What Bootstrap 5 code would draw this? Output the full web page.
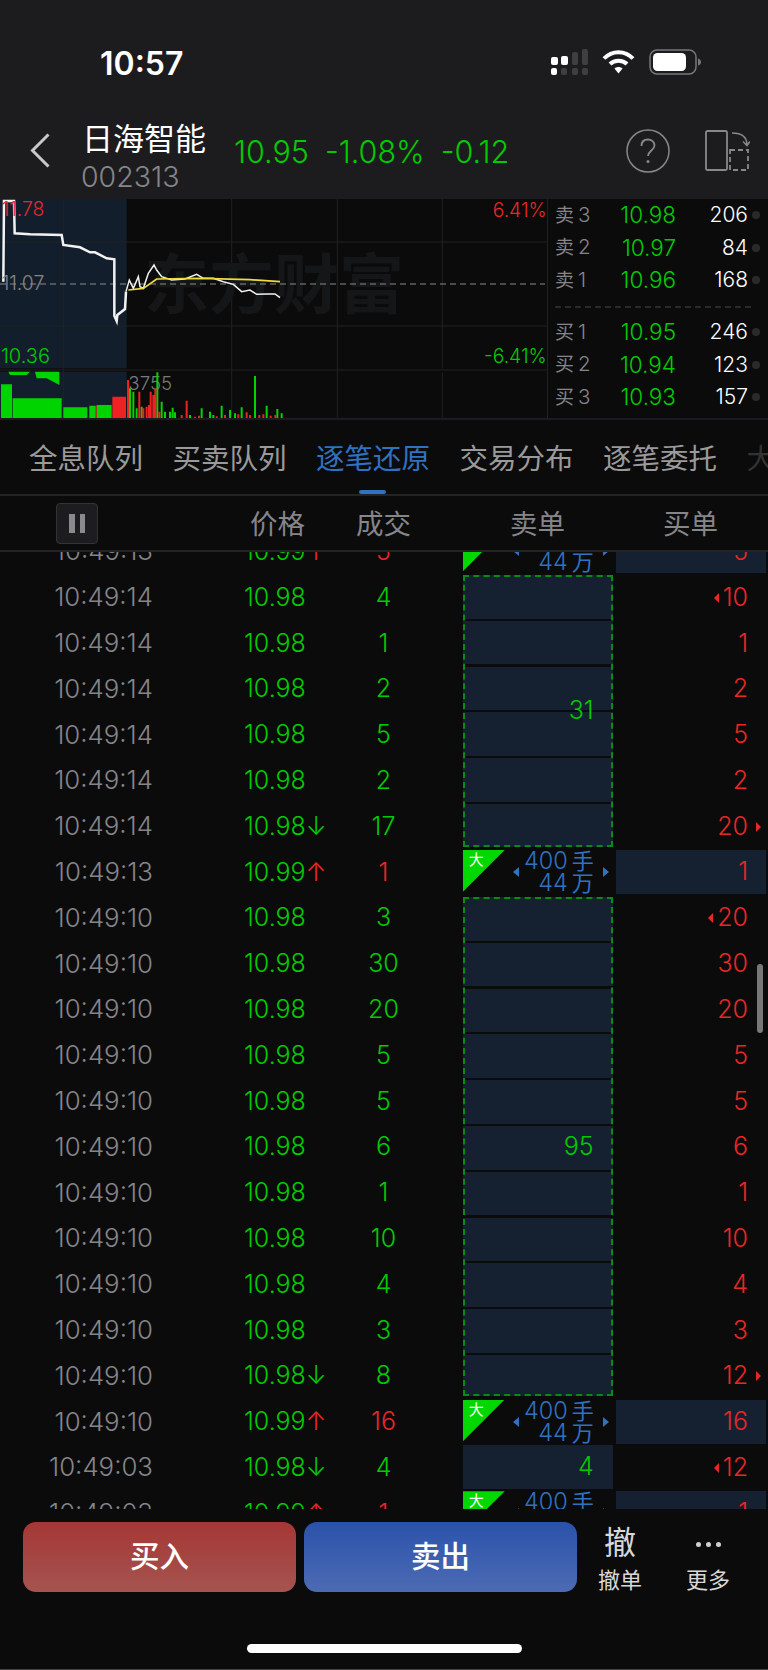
<!DOCTYPE html>
<html lang="zh"><head><meta charset="utf-8"><title>日海智能</title>
<link href="https://cdn.jsdelivr.net/npm/bootstrap@5.3.0/dist/css/bootstrap.min.css" rel="stylesheet">
<style>
:root{--g:#00cb00;--r:#ea2626;--b:#2f72c0;--gy:#85858a;--bg:#0b0b0c;--cell:#152130}
html,body{margin:0;width:768px;height:1670px;overflow:hidden;background:var(--bg)}
body{font-family:Inter,"Noto Sans CJK SC",sans-serif;font-weight:300;color:#fff;border-bottom:1px solid #444}
.phone-head{background:#1c1c1e;height:199px}
.status-line{height:105px;padding:50px 67px 0 100px;gap:14px}
.clock{font-size:32px;font-weight:600;line-height:28px}
.status-icons{gap:14px;margin-top:-1px}
.app-head{height:92px;padding-left:30px;padding-right:18px}
.back-ico{margin-top:28px;flex:none}
.name-col{margin-top:16px;margin-left:32px;width:124px;flex:none}
.stock-name{font-size:31px;line-height:36px;font-weight:400;white-space:nowrap}
.stock-code{font-size:28.5px;line-height:34px;color:var(--gy);margin-left:-1px;margin-top:3px}
.head-quote{font-size:30.5px;line-height:34px;color:var(--g);margin-left:28px;margin-top:30px;gap:16px;white-space:nowrap}
.help-ico{margin-top:24px;flex:none}
.split-ico{margin-top:25px;margin-left:35px;flex:none}
.market{height:221px;border-bottom:2px solid #1c1c1e}
.chart-pane{width:547px;height:219px;flex:none}
.chart-pane svg{display:block}
.chart-pane text{font-family:Inter,sans-serif;font-weight:300}
.chart-pane .wm{font-family:"Noto Sans CJK SC",sans-serif;font-weight:700}
.book{width:221px;border-left:1px solid #222;padding:0 0 0 7px}
.book-row{height:32.5px;line-height:32.5px}
.book-lab{width:34px;font-size:19px;color:var(--gy);font-weight:400;white-space:nowrap}
.book-lab span{font-size:20.5px;font-weight:300;margin-left:4px}
.book-price{width:87px;text-align:right;color:var(--g);font-size:22.5px}
.book-qty{width:72px;text-align:right;font-size:21px}
.book-dot{width:8px;height:8px;border-radius:50%;background:#2a2a2a;margin-left:4px}
.book-sep{height:19.5px;margin-right:17px;padding-top:9px}
.book-sep div{border-top:2px dashed #2a2a2a}
.tabs-line{height:76px;padding-left:29px;gap:29px;border-bottom:2px solid #232323;position:relative;white-space:nowrap;overflow:hidden}
.tab-item{font-size:28.5px;line-height:78px;height:74px;width:114.500px;color:#9a9a9a;font-weight:400;flex:none}
.tab-on{color:var(--b)}
.tab-off{color:#333}
.tab-mark{position:absolute;left:359px;bottom:0;width:27px;height:4px;border-radius:2px;background:var(--b)}
.col-line{height:56px;border-bottom:2px solid #232323;font-size:27.5px;font-weight:400;color:#85858a;position:relative}
.col-line span{position:absolute;top:10px;line-height:36px}
.pause-box{position:absolute;left:56px;top:7px;width:42px;height:41px;border:1px solid #333;border-radius:4px;background:#1d1d1f;display:flex;align-items:center;justify-content:center;gap:5px}
.pause-box i{width:5.5px;height:19px;background:#8a8a8e;display:block}
.tape-view{height:957px;overflow:hidden;position:relative}
.tape{display:grid;grid-template-columns:153px 184px 93px 186px 152px;grid-auto-rows:45.8px;margin-top:-23.1px;font-size:25px}
.tape>div{display:flex;align-items:center;min-width:0}
.tape>.t-time{color:var(--gy);justify-content:flex-end;font-size:25.8px}
.t-price{color:var(--g);padding-left:91px;white-space:nowrap}
.t-price b{font-weight:300}
.t-up{color:var(--r)}
.t-vol{justify-content:center}
.c-g{color:var(--g)}.c-r{color:var(--r)}
.t-sell{margin:1px 3.3px 2px 32.7px;color:var(--g);justify-content:flex-end;padding-right:19px}
.t-span6{grid-row:span 6;margin-top:.3px;margin-bottom:2.8px}
.t-span11{grid-row:span 11;margin-top:1.4px;margin-bottom:2.8px}
.t-group{border:2px dashed #088c18;padding-right:17px;background:repeating-linear-gradient(var(--cell) 0 41.7px,#0b0b0c 41.7px 43.9px,var(--cell) 43.9px 45.8px)}
.t-plain{background:var(--cell);margin-top:0;margin-bottom:1.8px}
.tape>.t-big{position:relative;color:var(--b);margin-top:.5px;margin-bottom:1.3px;padding-right:19px;flex-direction:column;align-items:flex-end;justify-content:center;line-height:22px;font-size:23.5px}
.t-big .zh{font-weight:400;font-size:22px;margin-left:4px}
.big-flag{position:absolute;left:0;top:0;width:42px;height:42px;background:#00d800;clip-path:polygon(0 0,100% 0,0 100%);color:#fff;font-size:15px;line-height:20px;padding-left:6px;font-weight:400}
.tri-l,.tri-r{position:absolute;top:50%;margin-top:-5px;border-style:solid;border-color:transparent;border-width:5px 0}
.t-big .tri-l{left:50px;border-right:6px solid var(--b)}
.t-big .tri-r{right:4px;border-left:6px solid var(--b)}
.t-buy{color:var(--r);justify-content:flex-end;padding-right:18px;margin-right:2px;position:relative}
.tape>.t-fill{background:var(--cell);margin-top:.5px;margin-bottom:1.3px}
.t-buy .tri-l{position:static;margin:0 4px 0 0;border-right:5px solid var(--r)}
.t-buy .tri-r{right:5px;border-left:5px solid var(--r)}
.scroll-thumb{position:absolute;left:757px;top:412px;width:6px;height:69px;border-radius:3px;background:#777}
.foot{height:160px;padding:13px 0 0 23px;position:relative}
.trade-btn{width:273px;height:70px;border-radius:13px;border:0;color:#fff;font-size:29.5px;line-height:64px;font-weight:500;font-family:"Noto Sans CJK SC",sans-serif;padding:0 0 6px}
.btn-buyin{background:linear-gradient(#a53735,#a55450)}
.btn-sellout{background:linear-gradient(#2a52ab,#4d6bb4);margin-left:8px}
.foot-act{width:88px;text-align:center;color:#d8d8d8;font-weight:400;margin-left:-1px;margin-right:1px}
.foot-act .bigch{font-size:32px;line-height:38px;height:38px;margin-top:2px}
.foot-dots{height:38px;gap:5px;margin-top:2px;padding-top:3px}
.foot-dots i{width:5px;height:5px;border-radius:50%;background:#d0d0d0;display:block}
.foot-act .lab{font-size:22px;line-height:28px;margin-top:4px}
.home-bar{position:absolute;left:246.5px;top:135px;width:275px;height:9px;border-radius:5px;background:#fff}
</style></head><body>
<div class="phone-head">
 <div class="status-line d-flex justify-content-between">
  <div class="clock">10:57</div>
  <div class="status-icons d-flex align-items-start">
   <svg width="37" height="26" viewBox="0 0 37 26"><g fill="#fff"><rect x="0" y="8" width="7" height="8" rx="2"/><rect x="10" y="7" width="7" height="9" rx="2"/><rect x="0" y="19" width="6" height="7" rx="2"/></g><g fill="#3f3f3f"><rect x="21" y="3" width="6" height="13" rx="2"/><rect x="31" y="0" width="6" height="16" rx="2"/><rect x="10" y="19" width="6" height="7" rx="2"/><rect x="21" y="19" width="6" height="7" rx="2"/><rect x="31" y="19" width="6" height="7" rx="2"/></g></svg>
   <svg width="33" height="25" viewBox="0 0 33 25"><g fill="none" stroke="#fff" stroke-width="4"><path d="M2 9.5C10 1 23 1 31 9.5"/><path d="M8 15C12.500 10.500 20.500 10.500 25 15"/></g><path d="M12.500 19.500C14.500 17.500 18.500 17.500 20.500 19.500L16.500 24.500Z" fill="#fff"/></svg>
   <svg width="52" height="26" viewBox="0 0 52 26"><rect x="1" y="1" width="46" height="24" rx="7" fill="none" stroke="#777" stroke-width="1.500"/><rect x="4" y="4" width="33" height="18" rx="4.500" fill="#fff"/><path d="M49 9.500C51 10 52 11.500 52 13S51 16 49 16.500Z" fill="#777"/></svg>
  </div>
 </div>
 <div class="app-head d-flex align-items-start">
  <svg class="back-ico" width="20" height="35" viewBox="0 0 20 35"><path d="M18.500 1.500L2.500 17.500L18.500 33.500" fill="none" stroke="#c8c8c8" stroke-width="3"/></svg>
  <div class="name-col">
   <div class="stock-name">日海智能</div>
   <div class="stock-code">002313</div>
  </div>
  <div class="head-quote d-flex"><span>10.95</span><span>-1.08%</span><span>-0.12</span></div>
  <svg class="help-ico ms-auto" width="44" height="44" viewBox="0 0 44 44"><circle cx="22" cy="22" r="21" fill="none" stroke="#888" stroke-width="1.500"/><path d="M15.500 17C15.500 12.500 18.500 10.500 22 10.500S28.500 13 28.500 16.500C28.500 21 22.500 21.500 22 27" fill="none" stroke="#888" stroke-width="1.800"/><circle cx="22" cy="32.500" r="1.500" fill="#888"/></svg>
  <svg class="split-ico" width="45" height="41" viewBox="0 0 45 41"><rect x="1" y="1" width="21" height="39" rx="1.500" fill="none" stroke="#888" stroke-width="1.800"/><rect x="25" y="20" width="18" height="20" fill="none" stroke="#888" stroke-width="1.800" stroke-dasharray="5 3"/><path d="M27 3C36 3 42 6 42 15M38 11.500L42 15.500L45 11.500" fill="none" stroke="#888" stroke-width="1.500"/></svg>
 </div>
</div>
<div class="market d-flex">
 <div class="chart-pane">
  <svg width="547" height="219" viewBox="0 12 1641 657">
   <rect x="0" y="12" width="380" height="508" fill="#131e2c"/><rect x="0" y="530" width="380" height="140" fill="#131e2c"/>
   <g stroke="#222" stroke-width="3"><path d="M0 141H1641M0 393H1641M0 525H1641M0 670H1641M190 12V668M695 12V668M1012 12V668M1327 12V520M1327 532V668"/></g>
   <text class="wm" x="432" y="340" font-size="195" fill="#151617">东方财富</text>
   <path d="M0 267H1635" stroke="#8a8a8a" stroke-width="3" stroke-dasharray="18 12"/>
   <polyline fill="none" stroke="#f2f2f2" stroke-width="7.500" points="10,260 12,18 42,18 44,115 90,118 185,120 190,150 240,157 270,172 285,172 320,190 343,193 343,362 350,378 352,360 375,342 378,290"/>
   <polyline fill="none" stroke="#f2f2f2" stroke-width="4.500" points="378,290 388,255 400,280 415,245 420,275 430,280 445,235 462,210 470,225 485,245 515,255 555,252 590,238 610,250 640,250 670,260 700,268 725,290 750,285 770,298 800,297 825,297 840,308"/>
   <polyline fill="none" stroke="#ecdc40" stroke-width="5" points="385,285 430,280 470,252 600,250 750,254 840,260"/>
   <text x="5" y="62" font-size="58" fill="#ea2626">11.78</text>
   <text x="5" y="285" font-size="58" fill="#85858a">11.07</text>
   <text x="3" y="505" font-size="60" fill="#00cb00">10.36</text>
   <text x="1640" y="65" font-size="58" fill="#ea2626" text-anchor="end">6.41%</text>
   <text x="1640" y="505" font-size="58" fill="#00cb00" text-anchor="end">-6.41%</text>
   <path fill="#00d400" d="M3 568H36V670H3ZM38 610H185V670H38ZM190 637H262V670H190ZM268 632H285V670H268ZM290 630H335V670H290ZM25 530H90L80 540H30ZM105 530H178V570L140 550H110Z"/>
   <path fill="#ee2222" d="M337 605H378V670H337ZM285 632H290V670H285Z"/>
   <text x="385" y="585" font-size="56" fill="#7a7a7a">3755</text>
   <path stroke="#00d400" stroke-width="6" fill="none" d="M390 670V580M400 670V590M410 670V640M425 670V635M472 670V532M485 670V620M495 670V650M510 670V650M518 670V638M525 670V652M570 670V660M605 670V640M630 670V650M640 670V660M665 670V632M690 670V645M705 670V655M725 670V637M765 670V543M800 670V632M832 670V642M845 670V655"/>
   <path stroke="#ee2222" stroke-width="6" fill="none" d="M384 670V555M418 670V590M430 670V640M440 670V635M447 670V630M452 670V590M460 670V600M466 670V580M478 670V650M545 670V660M560 670V617M585 670V665M597 670V662M650 670V664M675 670V660M715 670V658M740 670V652M750 670V660M778 670V660M790 670V658M812 670V662M826 670V660"/>
  </svg>
 </div>
 <div class="book flex-grow-1">
  <div class="book-row d-flex align-items-center"><div class="book-lab">卖<span>3</span></div><div class="book-price">10.98</div><div class="book-qty">206</div><div class="book-dot"></div></div>
  <div class="book-row d-flex align-items-center"><div class="book-lab">卖<span>2</span></div><div class="book-price">10.97</div><div class="book-qty">84</div><div class="book-dot"></div></div>
  <div class="book-row d-flex align-items-center"><div class="book-lab">卖<span>1</span></div><div class="book-price">10.96</div><div class="book-qty">168</div><div class="book-dot"></div></div>
  <div class="book-sep"><div></div></div>
  <div class="book-row d-flex align-items-center"><div class="book-lab">买<span>1</span></div><div class="book-price">10.95</div><div class="book-qty">246</div><div class="book-dot"></div></div>
  <div class="book-row d-flex align-items-center"><div class="book-lab">买<span>2</span></div><div class="book-price">10.94</div><div class="book-qty">123</div><div class="book-dot"></div></div>
  <div class="book-row d-flex align-items-center"><div class="book-lab">买<span>3</span></div><div class="book-price">10.93</div><div class="book-qty">157</div><div class="book-dot"></div></div>
 </div>
</div>
<div class="tabs-line d-flex">
 <div class="tab-item">全息队列</div><div class="tab-item">买卖队列</div><div class="tab-item tab-on">逐笔还原</div><div class="tab-item">交易分布</div><div class="tab-item">逐笔委托</div><div class="tab-item tab-off">大单</div>
 <div class="tab-mark"></div>
</div>
<div class="col-line">
 <div class="pause-box"><i></i><i></i></div>
 <span style="left:250px">价格</span><span style="left:356px">成交</span><span style="left:510px">卖单</span><span style="left:663px">买单</span>
</div>
<div class="tape-view">
 <div class="tape">
  <div class="t-time">10:49:13</div><div class="t-price">10.99<b class="t-up">↑</b></div><div class="t-vol c-r">5</div><div class="t-sell t-big"><div class="big-flag">大</div><i class="tri-l"></i><i class="tri-r"></i><div>400<span class="zh">手</span></div><div>44<span class="zh">万</span></div></div><div class="t-buy t-fill">5</div>

  <div class="t-time">10:49:14</div><div class="t-price">10.98</div><div class="t-vol c-g">4</div><div class="t-sell t-group t-span6">31</div><div class="t-buy"><i class="tri-l"></i>10</div>
  <div class="t-time">10:49:14</div><div class="t-price">10.98</div><div class="t-vol c-g">1</div><div class="t-buy">1</div>
  <div class="t-time">10:49:14</div><div class="t-price">10.98</div><div class="t-vol c-g">2</div><div class="t-buy">2</div>
  <div class="t-time">10:49:14</div><div class="t-price">10.98</div><div class="t-vol c-g">5</div><div class="t-buy">5</div>
  <div class="t-time">10:49:14</div><div class="t-price">10.98</div><div class="t-vol c-g">2</div><div class="t-buy">2</div>
  <div class="t-time">10:49:14</div><div class="t-price">10.98↓</div><div class="t-vol c-g">17</div><div class="t-buy">20<i class="tri-r"></i></div>

  <div class="t-time">10:49:13</div><div class="t-price">10.99<b class="t-up">↑</b></div><div class="t-vol c-r">1</div><div class="t-sell t-big"><div class="big-flag">大</div><i class="tri-l"></i><i class="tri-r"></i><div>400<span class="zh">手</span></div><div>44<span class="zh">万</span></div></div><div class="t-buy t-fill">1</div>

  <div class="t-time">10:49:10</div><div class="t-price">10.98</div><div class="t-vol c-g">3</div><div class="t-sell t-group t-span11">95</div><div class="t-buy"><i class="tri-l"></i>20</div>
  <div class="t-time">10:49:10</div><div class="t-price">10.98</div><div class="t-vol c-g">30</div><div class="t-buy">30</div>
  <div class="t-time">10:49:10</div><div class="t-price">10.98</div><div class="t-vol c-g">20</div><div class="t-buy">20</div>
  <div class="t-time">10:49:10</div><div class="t-price">10.98</div><div class="t-vol c-g">5</div><div class="t-buy">5</div>
  <div class="t-time">10:49:10</div><div class="t-price">10.98</div><div class="t-vol c-g">5</div><div class="t-buy">5</div>
  <div class="t-time">10:49:10</div><div class="t-price">10.98</div><div class="t-vol c-g">6</div><div class="t-buy">6</div>
  <div class="t-time">10:49:10</div><div class="t-price">10.98</div><div class="t-vol c-g">1</div><div class="t-buy">1</div>
  <div class="t-time">10:49:10</div><div class="t-price">10.98</div><div class="t-vol c-g">10</div><div class="t-buy">10</div>
  <div class="t-time">10:49:10</div><div class="t-price">10.98</div><div class="t-vol c-g">4</div><div class="t-buy">4</div>
  <div class="t-time">10:49:10</div><div class="t-price">10.98</div><div class="t-vol c-g">3</div><div class="t-buy">3</div>
  <div class="t-time">10:49:10</div><div class="t-price">10.98↓</div><div class="t-vol c-g">8</div><div class="t-buy">12<i class="tri-r"></i></div>

  <div class="t-time">10:49:10</div><div class="t-price">10.99<b class="t-up">↑</b></div><div class="t-vol c-r">16</div><div class="t-sell t-big"><div class="big-flag">大</div><i class="tri-l"></i><i class="tri-r"></i><div>400<span class="zh">手</span></div><div>44<span class="zh">万</span></div></div><div class="t-buy t-fill">16</div>
  <div class="t-time">10:49:03</div><div class="t-price">10.98↓</div><div class="t-vol c-g">4</div><div class="t-sell t-plain">4</div><div class="t-buy"><i class="tri-l"></i>12</div>
  <div class="t-time">10:49:03</div><div class="t-price">10.99<b class="t-up">↑</b></div><div class="t-vol c-r">1</div><div class="t-sell t-big"><div class="big-flag">大</div><i class="tri-l"></i><i class="tri-r"></i><div>400<span class="zh">手</span></div><div>44<span class="zh">万</span></div></div><div class="t-buy t-fill">1</div>
 </div>
 <div class="scroll-thumb"></div>
</div>
<div class="foot d-flex align-items-start">
 <button class="trade-btn btn-buyin" type="button">买入</button>
 <button class="trade-btn btn-sellout" type="button">卖出</button>
 <div class="foot-act"><div class="bigch">撤</div><div class="lab">撤单</div></div>
 <div class="foot-act"><div class="foot-dots d-flex justify-content-center align-items-center"><i></i><i></i><i></i></div><div class="lab">更多</div></div>
 <div class="home-bar"></div>
</div>
</body></html>
